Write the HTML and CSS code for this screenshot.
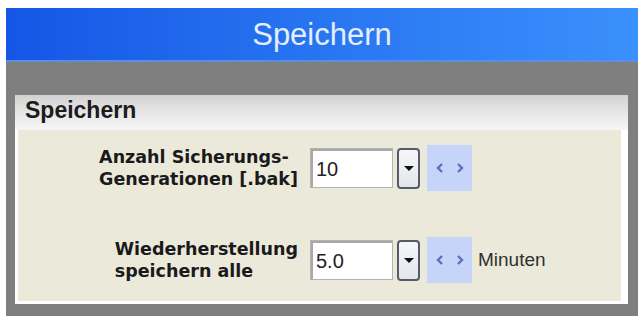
FILE: index.html
```html
<!DOCTYPE html>
<html lang="de">
<head>
<meta charset="utf-8">
<title>Speichern</title>
<link rel="stylesheet" href="styles.css">
</head>
<body>
<div class="window">
  <div class="titlebar">Speichern</div>
  <div class="frame">
    <div class="panel">
      <div class="panel-head">Speichern</div>
      <div class="panel-body">
        <div class="row">
          <div class="label">Anzahl Sicherungs-<br>Generationen [.bak]</div>
          <div class="controls">
            <div class="input">10</div>
            <div class="dropbtn"><svg width="10" height="5" viewBox="0 0 10 5"><polygon points="0,0 10,0 5,5" fill="#111"/></svg></div>
            <div class="spin"><svg width="30" height="12" viewBox="0 0 30 12"><polyline points="7,2 3,6 7,10" fill="none" stroke="#5a72b6" stroke-width="2.4"/><polyline points="23,2 27,6 23,10" fill="none" stroke="#5a72b6" stroke-width="2.4"/></svg></div>
          </div>
        </div>
        <div class="row row2">
          <div class="label">Wiederherstellung<br>speichern alle</div>
          <div class="controls">
            <div class="input">5.0</div>
            <div class="dropbtn"><svg width="10" height="5" viewBox="0 0 10 5"><polygon points="0,0 10,0 5,5" fill="#111"/></svg></div>
            <div class="spin"><svg width="30" height="12" viewBox="0 0 30 12"><polyline points="7,2 3,6 7,10" fill="none" stroke="#5a72b6" stroke-width="2.4"/><polyline points="23,2 27,6 23,10" fill="none" stroke="#5a72b6" stroke-width="2.4"/></svg></div>
            <div class="unit">Minuten</div>
          </div>
        </div>
      </div>
    </div>
  </div>
</div>
</body>
</html>
```
FILE: styles.css
```css
html, body {
  margin: 0;
  padding: 0;
  background: #ffffff;
}
.window {
  margin: 8px 0 0 6px;
  width: 632px;
}
.titlebar {
  height: 54px;
  background: linear-gradient(to right, #1556e6 0%, #2a78f2 55%, #3a90fc 100%);
  color: #e4eeff;
  font-family: "Liberation Sans", Arial, sans-serif;
  font-size: 31px;
  display: flex;
  align-items: center;
  justify-content: center;
  box-shadow: inset 0 -2px 0 #5a8ee0;
}
.frame {
  background: #7f7f7f;
  padding: 33px 10px 12px 9px;
}
.panel {
  background: #ffffff;
  display: flex;
  flex-direction: column;
}
.panel-head {
  height: 35px;
  background: linear-gradient(to bottom, #d2d2d2 0%, #e6e6e6 50%, #f6f6f6 100%);
  font-family: "Liberation Sans", Arial, sans-serif;
  font-weight: bold;
  font-size: 23px;
  color: #1c1c1c;
  padding-left: 10px;
  display: flex;
  align-items: flex-end;
  padding-bottom: 6px;
  box-sizing: border-box;
}
.panel-body {
  background: #ebe9da;
  margin: 0 7px 3px 3px;
  height: 171px;
  padding-top: 15px;
  box-sizing: border-box;
  display: flex;
  flex-direction: column;
  gap: 46px;
}
.row {
  display: grid;
  grid-template-columns: 280px auto;
  column-gap: 12px;
  align-items: center;
  height: 46px;
}
.label {
  justify-self: end;
  text-align: left;
  font-family: "DejaVu Sans", Verdana, sans-serif;
  font-weight: bold;
  font-size: 17.5px;
  line-height: 22px;
  color: #1a1a1a;
}
.controls {
  display: flex;
  align-items: center;
}
.input {
  width: 83px;
  height: 40px;
  box-sizing: border-box;
  background: #ffffff;
  border: 1px solid #b4b4b4;
  box-shadow: inset 2px 2px 0 #a8a8a8;
  font-family: "Liberation Sans", Arial, sans-serif;
  font-size: 20px;
  color: #222;
  padding: 9px 0 0 5px;
}
.dropbtn {
  width: 23px;
  height: 41px;
  box-sizing: border-box;
  margin-left: 4px;
  border: 2px solid #555c68;
  border-radius: 4px;
  background: linear-gradient(to bottom, #f6f7f9, #e2e6ec);
  display: flex;
  align-items: center;
  justify-content: center;
  padding-top: 1px;
}
.spin {
  width: 45px;
  height: 46px;
  margin-left: 7px;
  background: #c6d4f9;
  display: flex;
  align-items: center;
  justify-content: center;
}
.unit {
  margin-left: 6px;
  font-family: "Liberation Sans", Arial, sans-serif;
  font-size: 19px;
  color: #303030;
}
```
